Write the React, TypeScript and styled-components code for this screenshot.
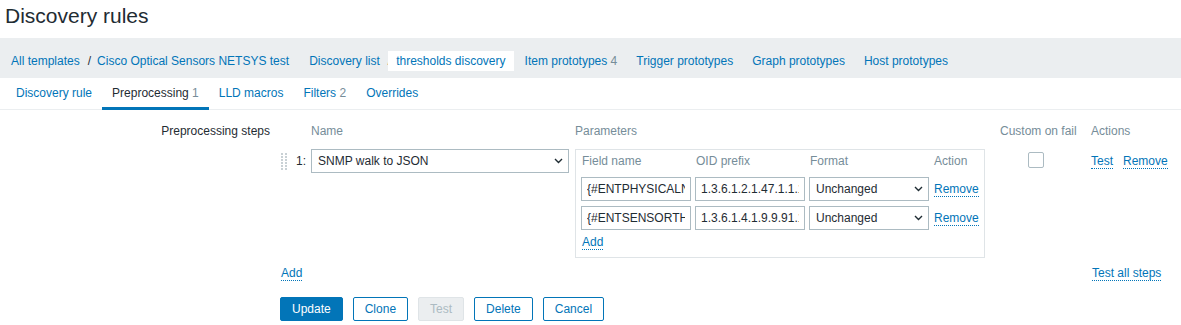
import { Fragment } from "react";
import styled, { createGlobalStyle } from "styled-components";

const GlobalStyle = createGlobalStyle`
  body {
    margin: 0;
    background: #fff;
    color: #1f2c33;
    font-family: Arial, "Liberation Sans", sans-serif;
    font-size: 12px;
  }
  * { box-sizing: border-box; }
`;

const Header = styled.header`
  height: 38px;
  padding: 4px 5px 0;
`;

const Title = styled.h1`
  margin: 0;
  font-size: 21px;
  font-weight: normal;
  line-height: 24px;
  color: #1f2c33;
`;

const Breadcrumbs = styled.nav`
  height: 40px;
  padding: 13px 0 0 11px;
  background: #ebeef0;
  display: flex;
  align-items: flex-start;
  gap: 19px;
`;

const CrumbGroup = styled.div`
  display: flex;
  align-items: center;
  height: 20px;
  &:nth-child(2) {
    margin-left: 1px;
  }
`;

const Crumb = styled.a<{ $active?: boolean }>`
  color: #0275b8;
  text-decoration: none;
  line-height: 20px;
  white-space: nowrap;
  ${({ $active }) =>
    $active &&
    `
    background: #fff;
    padding: 0 8px;
    margin-left: -9px;
    margin-right: -8px;
  `}
`;

const Sep = styled.span`
  margin: 0 6px 0 8px;
  color: #1f2c33;
`;

const Count = styled.span`
  color: #768d99;
`;

const Tabs = styled.div`
  height: 32px;
  padding-left: 6px;
  display: flex;
  border-bottom: 1px solid #ebeef0;
`;

const Tab = styled.a<{ $active?: boolean }>`
  height: 32px;
  margin-bottom: -1px;
  padding: 0 10px;
  line-height: 30px;
  text-decoration: none;
  white-space: nowrap;
  color: ${({ $active }) => ($active ? "#1f2c33" : "#0275b8")};
  box-shadow: ${({ $active }) => ($active ? "inset 0 -3px 0 #0275b8" : "none")};
`;

const Form = styled.div`
  padding-top: 14px;
  display: grid;
  grid-template-columns: 270px 1fr;
  column-gap: 10px;
`;

const Label = styled.div`
  text-align: right;
  line-height: 14px;
`;

const Steps = styled.div`
  display: grid;
  grid-template-columns: 31px 264px 425px 91px 1fr;
  align-items: start;
`;

const HeadCell = styled.div`
  color: #768d99;
  line-height: 14px;
  height: 14px;
  margin-bottom: 11px;
  white-space: nowrap;
`;

const StepNum = styled.div`
  height: 24px;
  display: flex;
  align-items: center;
  gap: 9px;
`;

const SelectBox = styled.div<{ $width: number }>`
  width: ${({ $width }) => $width}px;
  height: 24px;
  border: 1px solid #acbbc2;
  background: #fff;
  padding: 0 5px 0 6px;
  display: flex;
  align-items: center;
  justify-content: space-between;
  line-height: 22px;
  white-space: nowrap;
`;

const Params = styled.div`
  width: 410px;
  border: 1px solid #dfe4e7;
  padding: 4px 5px 8px;
  display: grid;
  grid-template-columns: 110px 110px 120px auto;
  column-gap: 4px;
  row-gap: 5px;
  align-items: center;
`;

const ParamHead = styled.div`
  color: #768d99;
  line-height: 14px;
  height: 18px;
  padding-left: 1px;
  align-self: start;
`;

const TextInput = styled.input`
  width: 100%;
  height: 24px;
  border: 1px solid #acbbc2;
  padding: 0 5px;
  font: inherit;
  color: #1f2c33;
  outline: none;
`;

const Link = styled.a`
  color: #0275b8;
  text-decoration: none;
  border-bottom: 1px dotted #0275b8;
  line-height: 14px;
  white-space: nowrap;
`;

const LinkCell = styled.div`
  line-height: 14px;
  padding-left: 1px;
`;

const LinkRow = styled.div<{ $top?: number }>`
  display: flex;
  gap: 10px;
  padding-top: ${({ $top }) => $top ?? 0}px;
  line-height: 14px;
`;

const Checkbox = styled.span`
  display: block;
  width: 16px;
  height: 16px;
  margin: 3px 0 0 28px;
  border: 1px solid #acbbc2;
  border-radius: 2px;
  background: #fff;
`;

const Footer = styled.div<{ $span: string }>`
  grid-column: ${({ $span }) => $span};
  margin-top: 8px;
  line-height: 14px;
  padding-left: 1px;
`;

const Buttons = styled.div`
  grid-column: 2;
  margin-top: 17px;
  display: flex;
  gap: 10px;
`;

const Button = styled.button<{ $kind: "main" | "alt" | "off" }>`
  height: 24px;
  padding: 0 11px;
  border-radius: 2px;
  font: inherit;
  cursor: pointer;
  border: 1px solid
    ${({ $kind }) => ($kind === "off" ? "#dfe4e7" : "#0275b8")};
  background: ${({ $kind }) =>
    $kind === "main" ? "#0275b8" : $kind === "off" ? "#ebeef0" : "#fff"};
  color: ${({ $kind }) =>
    $kind === "main" ? "#fff" : $kind === "off" ? "#acbbc2" : "#0275b8"};
`;

function Chevron() {
  return (
    <svg width="9" height="6" viewBox="0 0 9 6">
      <path d="M1 1l3.5 3.5L8 1" fill="none" stroke="#1f2c33" strokeWidth="1.4" />
    </svg>
  );
}

function DragHandle() {
  const dots = [];
  for (let r = 0; r < 6; r++) {
    for (let c = 0; c < 2; c++) {
      dots.push(<rect key={`${r}-${c}`} x={c * 4 + 1} y={r * 3} width="2" height="2" fill="#c9d1d5" />);
    }
  }
  return (
    <svg width="7" height="17" viewBox="0 0 7 17">
      {dots}
    </svg>
  );
}

const fields = [
  { name: "{#ENTPHYSICALNAME}", oid: "1.3.6.1.2.1.47.1.1.1.1.7" },
  { name: "{#ENTSENSORTHRESHOLDSEVERITY}", oid: "1.3.6.1.4.1.9.9.91.1.2.1.1.2" },
];

export default function App() {
  return (
    <>
      <GlobalStyle />
      <Header>
        <Title>Discovery rules</Title>
      </Header>

      <Breadcrumbs>
        <CrumbGroup>
          <Crumb>All templates</Crumb>
          <Sep>/</Sep>
          <Crumb>Cisco Optical Sensors NETSYS test</Crumb>
        </CrumbGroup>
        <CrumbGroup>
          <Crumb>Discovery list</Crumb>
          <Sep>/</Sep>
          <Crumb $active>thresholds discovery</Crumb>
        </CrumbGroup>
        <CrumbGroup>
          <Crumb>
            Item prototypes <Count>4</Count>
          </Crumb>
        </CrumbGroup>
        <CrumbGroup>
          <Crumb>Trigger prototypes</Crumb>
        </CrumbGroup>
        <CrumbGroup>
          <Crumb>Graph prototypes</Crumb>
        </CrumbGroup>
        <CrumbGroup>
          <Crumb>Host prototypes</Crumb>
        </CrumbGroup>
      </Breadcrumbs>

      <Tabs>
        <Tab>Discovery rule</Tab>
        <Tab $active>
          Preprocessing <Count>1</Count>
        </Tab>
        <Tab>LLD macros</Tab>
        <Tab>
          Filters <Count>2</Count>
        </Tab>
        <Tab>Overrides</Tab>
      </Tabs>

      <Form>
        <Label>Preprocessing steps</Label>
        <Steps>
          <HeadCell />
          <HeadCell>Name</HeadCell>
          <HeadCell>Parameters</HeadCell>
          <HeadCell>Custom on fail</HeadCell>
          <HeadCell>Actions</HeadCell>

          <StepNum>
            <DragHandle />
            <span>1:</span>
          </StepNum>
          <SelectBox $width={258}>
            SNMP walk to JSON
            <Chevron />
          </SelectBox>
          <Params>
            <ParamHead>Field name</ParamHead>
            <ParamHead>OID prefix</ParamHead>
            <ParamHead>Format</ParamHead>
            <ParamHead>Action</ParamHead>
            {fields.map((f) => (
              <Fragment key={f.name}>
                <TextInput defaultValue={f.name} />
                <TextInput defaultValue={f.oid} />
                <SelectBox $width={120}>
                  Unchanged
                  <Chevron />
                </SelectBox>
                <LinkCell>
                  <Link>Remove</Link>
                </LinkCell>
              </Fragment>
            ))}
            <LinkCell>
              <Link>Add</Link>
            </LinkCell>
          </Params>
          <Checkbox />
          <LinkRow $top={5}>
            <Link>Test</Link>
            <Link>Remove</Link>
          </LinkRow>

          <Footer $span="1 / 5">
            <Link>Add</Link>
          </Footer>
          <Footer $span="5">
            <Link>Test all steps</Link>
          </Footer>
        </Steps>

        <Buttons>
          <Button $kind="main">Update</Button>
          <Button $kind="alt">Clone</Button>
          <Button $kind="off" disabled>
            Test
          </Button>
          <Button $kind="alt">Delete</Button>
          <Button $kind="alt">Cancel</Button>
        </Buttons>
      </Form>
    </>
  );
}
